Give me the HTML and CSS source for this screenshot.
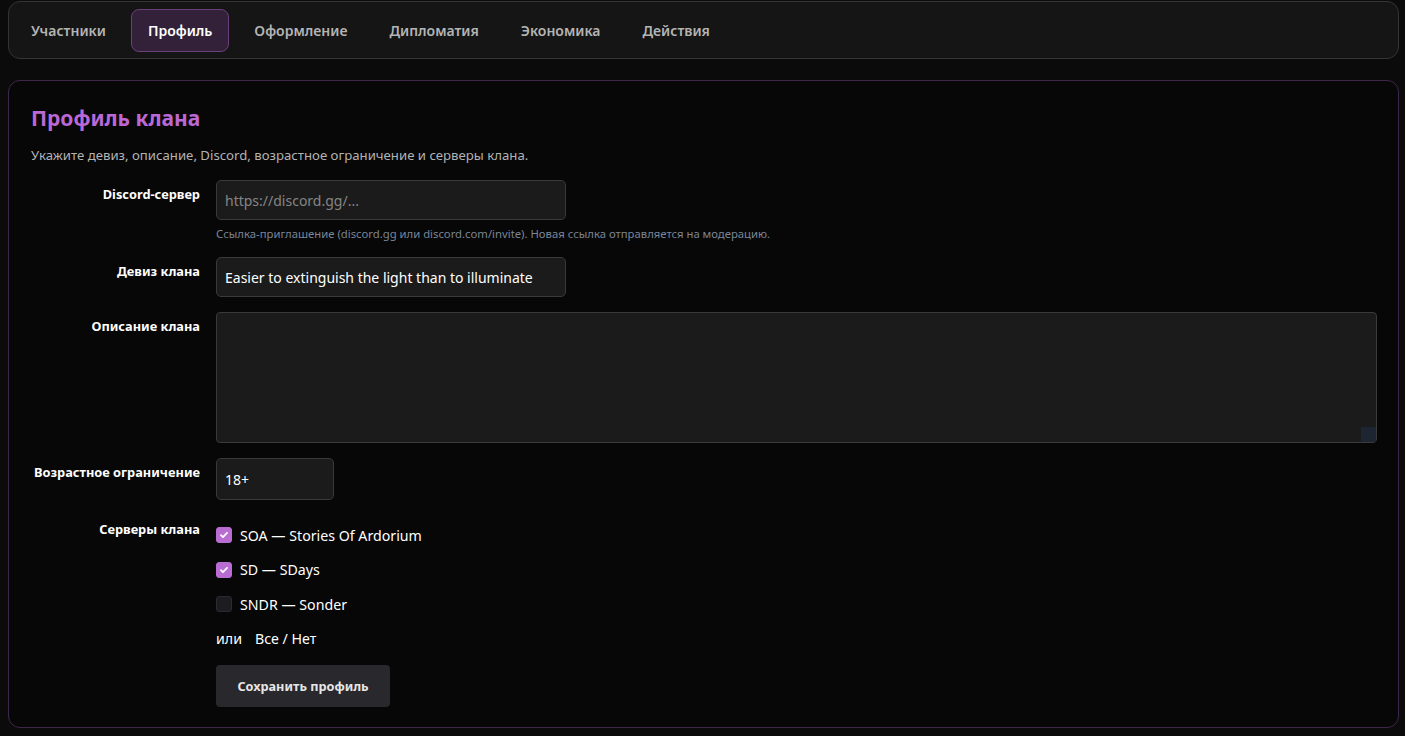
FILE: index.html
```html
<!DOCTYPE html>
<html lang="ru">
<head>
<meta charset="utf-8">
<title>Профиль клана</title>
<link rel="stylesheet" href="styles.css">
</head>
<body>
<div class="page">
  <nav class="tabs">
    <span class="tab">Участники</span>
    <span class="tab active">Профиль</span>
    <span class="tab">Оформление</span>
    <span class="tab">Дипломатия</span>
    <span class="tab">Экономика</span>
    <span class="tab">Действия</span>
  </nav>

  <section class="card">
    <h1 class="title">Профиль клана</h1>
    <p class="subtitle">Укажите девиз, описание, Discord, возрастное ограничение и серверы клана.</p>

    <div class="form">
      <div class="row">
        <label class="label">Discord-сервер</label>
        <div class="field">
          <input class="input w-350" type="text" placeholder="https://discord.gg/...">
          <div class="help">Ссылка-приглашение (discord.gg или discord.com/invite). Новая ссылка отправляется на модерацию.</div>
        </div>
      </div>

      <div class="row">
        <label class="label">Девиз клана</label>
        <div class="field">
          <input class="input w-350" type="text" value="Easier to extinguish the light than to illuminate">
        </div>
      </div>

      <div class="row">
        <label class="label">Описание клана</label>
        <div class="field grow">
          <div class="area-wrap">
            <textarea class="area"></textarea>
            <span class="grip"></span>
          </div>
        </div>
      </div>

      <div class="row">
        <label class="label">Возрастное ограничение</label>
        <div class="field">
          <input class="input w-118" type="text" value="18+">
        </div>
      </div>

      <div class="row">
        <label class="label">Серверы клана</label>
        <div class="field servers">
          <div class="opt"><span class="cb on"><svg viewBox="0 0 16 16" width="16" height="16"><path d="M4.5 8.2l2.3 2.2 4.7-4.8" fill="none" stroke="#fff" stroke-width="2" stroke-linecap="round" stroke-linejoin="round"/></svg></span><span>SOA — Stories Of Ardorium</span></div>
          <div class="opt"><span class="cb on"><svg viewBox="0 0 16 16" width="16" height="16"><path d="M4.5 8.2l2.3 2.2 4.7-4.8" fill="none" stroke="#fff" stroke-width="2" stroke-linecap="round" stroke-linejoin="round"/></svg></span><span>SD — SDays</span></div>
          <div class="opt"><span class="cb"></span><span>SNDR — Sonder</span></div>
          <div class="opt or"><span>или</span><span>Все / Нет</span></div>
          <button class="btn">Сохранить профиль</button>
        </div>
      </div>
    </div>
  </section>
</div>
</body>
</html>
```

FILE: styles.css
```css
* { box-sizing: border-box; }

html, body {
  margin: 0;
  padding: 0;
  background: #0b0b0b;
  color: #ffffff;
  font-family: "Noto Sans", "Open Sans", sans-serif;
}

.page {
  padding: 1px 6px 8px 8px;
  display: flex;
  flex-direction: column;
  gap: 21px;
}

.tabs {
  display: flex;
  align-items: center;
  gap: 8px;
  height: 58px;
  padding: 0 5px;
  background: #151515;
  border: 1px solid #343434;
  border-radius: 12px;
}

.tab {
  display: flex;
  align-items: center;
  height: 43px;
  padding: 0 16px;
  font-size: 14px;
  font-weight: 600;
  color: #b4b4b4;
  border: 1px solid transparent;
  border-radius: 8px;
}

.tab.active {
  color: #ffffff;
  background: #33213a;
  border-color: #6b4079;
}

.card {
  background: #070707;
  border: 1px solid #40264a;
  border-radius: 12px;
  padding: 23px 22px 20px 22px;
  height: 648px;
}

.title {
  margin: 0;
  font-size: 21px;
  line-height: 28px;
  font-weight: 700;
  color: #bb68d6;
}

.subtitle {
  margin: 14px 0 0 0;
  font-size: 13.2px;
  line-height: 18px;
  color: #b3b3b3;
}

.form {
  margin-top: 16px;
  display: flex;
  flex-direction: column;
  gap: 15px;
}

.row {
  display: flex;
  gap: 16px;
  align-items: flex-start;
}

.label {
  width: 169px;
  flex: none;
  text-align: right;
  font-size: 12.8px;
  font-weight: 700;
  line-height: 18px;
  padding-top: 5px;
  color: #ffffff;
}

.field {
  display: flex;
  flex-direction: column;
}

.field.grow { flex: 1; }

.input {
  height: 40px;
  background: #1b1b1b;
  border: 1px solid #3a3a3a;
  border-radius: 5px;
  padding: 0 8px;
  color: #ffffff;
  font-family: inherit;
  font-size: 14px;
  outline: none;
}

.input::placeholder { color: #858585; }

.w-350 { width: 350px; }
.w-118 { width: 118px; height: 42px; }

.help {
  margin-top: 6px;
  font-size: 11.3px;
  line-height: 16px;
  color: #7b8596;
}

.area-wrap {
  position: relative;
  width: 1161px;
}

.area {
  display: block;
  width: 100%;
  height: 131px;
  background: #1b1b1b;
  border: 1px solid #3a3a3a;
  border-radius: 4px;
  resize: none;
  color: #fff;
  font-family: inherit;
  outline: none;
}

.grip {
  position: absolute;
  right: 1px;
  bottom: 1px;
  width: 15px;
  height: 15px;
  background: #1d2533;
}

.servers {
  padding-top: 9px;
  gap: 12.5px;
}

.opt {
  display: flex;
  align-items: center;
  gap: 8px;
  height: 22px;
  font-size: 14.2px;
  color: #ffffff;
}

.opt.or { gap: 13px; }

.cb {
  width: 16px;
  height: 16px;
  flex: none;
  border-radius: 3px;
  background: #1d1d21;
  border: 1px solid #2a2a2f;
  display: flex;
  align-items: center;
  justify-content: center;
}

.cb.on {
  background: #b96cd1;
  border-color: #b96cd1;
}

.cb svg { display: block; width: 14px; height: 14px; }

.btn {
  margin-top: 2.5px;
  align-self: flex-start;
  width: 174px;
  height: 42px;
  background: #29292d;
  border: none;
  border-radius: 4px;
  color: #e6e6e6;
  font-family: inherit;
  font-size: 12.7px;
  font-weight: 700;
}
```
